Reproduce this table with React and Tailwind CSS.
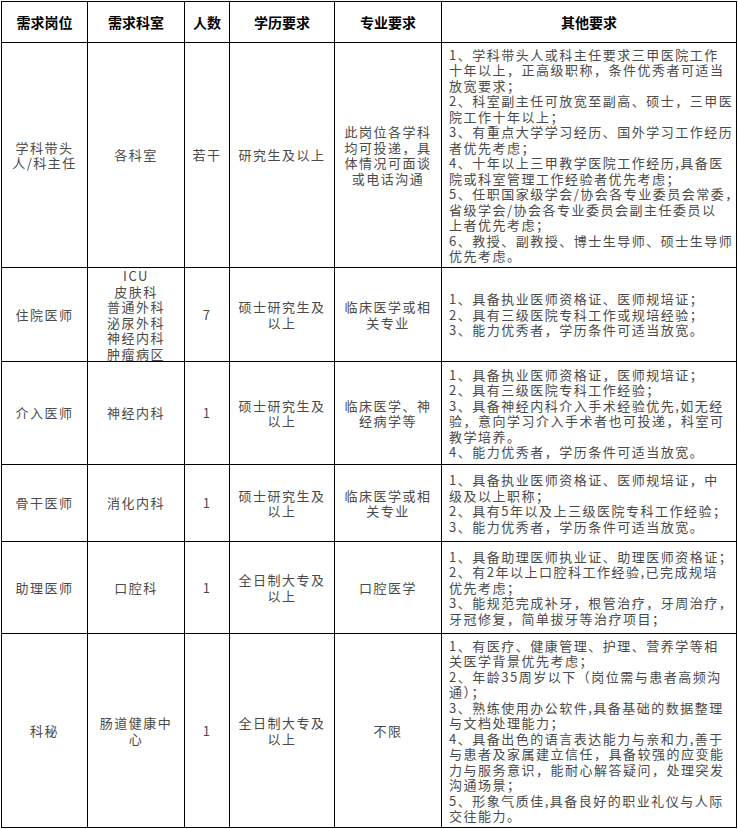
import React from "react";

const rows = [
  {
    h: "h-[225px]",
    post: ["学科带头", "人/科主任"],
    dept: ["各科室"],
    num: "若干",
    edu: ["研究生及以上"],
    major: ["此岗位各学科", "均可投递，具", "体情况可面谈", "或电话沟通"],
    other: [
      "1、学科带头人或科主任要求三甲医院工作",
      "十年以上，正高级职称，条件优秀者可适当",
      "放宽要求；",
      "2、科室副主任可放宽至副高、硕士，三甲医",
      "院工作十年以上；",
      "3、有重点大学学习经历、国外学习工作经历",
      "者优先考虑；",
      "4、十年以上三甲教学医院工作经历,具备医",
      "院或科室管理工作经验者优先考虑；",
      "5、任职国家级学会/协会各专业委员会常委，",
      "省级学会/协会各专业委员会副主任委员以",
      "上者优先考虑；",
      "6、教授、副教授、博士生导师、硕士生导师",
      "优先考虑。",
    ],
  },
  {
    h: "h-[93px]",
    post: ["住院医师"],
    dept: ["ICU", "皮肤科", "普通外科", "泌尿外科", "神经内科", "肿瘤病区"],
    num: "7",
    edu: ["硕士研究生及", "以上"],
    major: ["临床医学或相", "关专业"],
    other: [
      "1、具备执业医师资格证、医师规培证；",
      "2、具有三级医院专科工作或规培经验；",
      "3、能力优秀者，学历条件可适当放宽。",
    ],
  },
  {
    h: "h-[103px]",
    post: ["介入医师"],
    dept: ["神经内科"],
    num: "1",
    edu: ["硕士研究生及", "以上"],
    major: ["临床医学、神", "经病学等"],
    other: [
      "1、具备执业医师资格证，医师规培证；",
      "2、具有三级医院专科工作经验；",
      "3、具备神经内科介入手术经验优先,如无经",
      "验，意向学习介入手术者也可投递，科室可",
      "教学培养。",
      "4、能力优秀者，学历条件可适当放宽。",
    ],
  },
  {
    h: "h-[77px]",
    post: ["骨干医师"],
    dept: ["消化内科"],
    num: "1",
    edu: ["硕士研究生及", "以上"],
    major: ["临床医学或相", "关专业"],
    other: [
      "1、具备执业医师资格证、医师规培证，中",
      "级及以上职称；",
      "2、具有5年以及上三级医院专科工作经验；",
      "3、能力优秀者，学历条件可适当放宽。",
    ],
  },
  {
    h: "h-[92px]",
    post: ["助理医师"],
    dept: ["口腔科"],
    num: "1",
    edu: ["全日制大专及", "以上"],
    major: ["口腔医学"],
    other: [
      "1、具备助理医师执业证、助理医师资格证；",
      "2、有2年以上口腔科工作经验,已完成规培",
      "优先考虑；",
      "3、能规范完成补牙，根管治疗，牙周治疗，",
      "牙冠修复，简单拔牙等治疗项目；",
    ],
  },
  {
    h: "h-[194px]",
    post: ["科秘"],
    dept: ["肠道健康中", "心"],
    num: "1",
    edu: ["全日制大专及", "以上"],
    major: ["不限"],
    other: [
      "1、有医疗、健康管理、护理、营养学等相",
      "关医学背景优先考虑；",
      "2、年龄35周岁以下（岗位需与患者高频沟",
      "通）；",
      "3、熟练使用办公软件,具备基础的数据整理",
      "与文档处理能力；",
      "4、具备出色的语言表达能力与亲和力,善于",
      "与患者及家属建立信任，具备较强的应变能",
      "力与服务意识，能耐心解答疑问，处理突发",
      "沟通场景；",
      "5、形象气质佳,具备良好的职业礼仪与人际",
      "交往能力。",
    ],
  },
];

const heads = ["需求岗位", "需求科室", "人数", "学历要求", "专业要求", "其他要求"];

const Lines = ({ items }) => (
  <>
    {items.map((t, i) => (
      <div key={i} className="whitespace-nowrap">
        {t}
      </div>
    ))}
  </>
);

const cell = "border border-black p-0 align-middle";

export default function App() {
  return (
    <div className="bg-white w-[738px] h-[829px] pt-px pl-px font-['Noto_Sans_CJK_SC',sans-serif]">
      <table className="border-collapse table-fixed w-[735px]">
        <colgroup>
          <col className="w-[86px]" />
          <col className="w-[97px]" />
          <col className="w-[45px]" />
          <col className="w-[105px]" />
          <col className="w-[107px]" />
          <col className="w-[295px]" />
        </colgroup>
        <thead>
          <tr className="h-[41px]">
            {heads.map((h) => (
              <th key={h} className={`${cell} text-[14px] font-bold text-black text-center`}>
                {h}
              </th>
            ))}
          </tr>
        </thead>
        <tbody className="text-[13px] leading-[15.5px] tracking-[1.5px] text-[#4a4a4a]">
          {rows.map((r, i) => (
            <tr key={i} className={r.h}>
              <td className={`${cell} text-center`}>
                <Lines items={r.post} />
              </td>
              <td className={`${cell} text-center`}>
                <Lines items={r.dept} />
              </td>
              <td className={`${cell} text-center`}>{r.num}</td>
              <td className={`${cell} text-center`}>
                <Lines items={r.edu} />
              </td>
              <td className={`${cell} text-center`}>
                <Lines items={r.major} />
              </td>
              <td className={`${cell} pl-[7px] text-left`}>
                <Lines items={r.other} />
              </td>
            </tr>
          ))}
        </tbody>
      </table>
    </div>
  );
}
